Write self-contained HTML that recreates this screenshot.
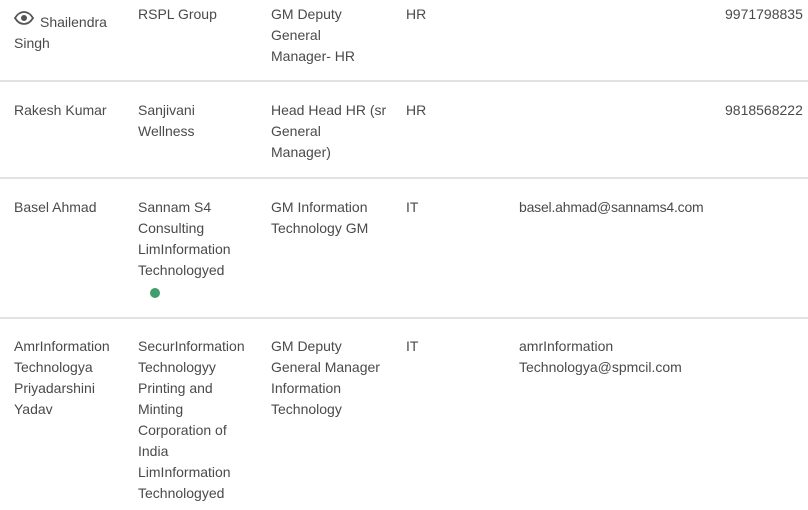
<!DOCTYPE html>
<html><head><meta charset="utf-8"><style>
body{margin:0;width:808px;height:510px;overflow:hidden;background:#fff;font-family:"Liberation Sans",sans-serif;font-size:14px;line-height:21px;color:#4a4a4a;position:relative}
.t{position:absolute;white-space:nowrap}
.sep{position:absolute;left:0;width:808px;height:2px;background:#e2e2e2}
.dot{position:absolute;width:10px;height:10px;border-radius:50%;background:#3f9e6a}
</style></head><body>
<svg style="position:absolute;left:14px;top:11px" width="20" height="14" viewBox="0 0 20 14"><path d="M1 7C4 2 7 1 10 1s6 1 9 6c-3 5-6 6-9 6S4 12 1 7z" fill="none" stroke="#555" stroke-width="1.8"/><circle cx="10" cy="7" r="3" fill="#555"/></svg>
<div class="t" style="left:40px;top:12px">Shailendra</div>
<div class="t" style="left:14px;top:33px">Singh</div>
<div class="t" style="left:138px;top:4px">RSPL Group</div>
<div class="t" style="left:271px;top:4px">GM Deputy<br>General<br>Manager- HR</div>
<div class="t" style="left:406px;top:4px">HR</div>
<div class="t" style="left:725px;top:4px">9971798835</div>
<div class="sep" style="top:80px"></div>
<div class="t" style="left:14px;top:100px">Rakesh Kumar</div>
<div class="t" style="left:138px;top:100px">Sanjivani<br>Wellness</div>
<div class="t" style="left:271px;top:100px">Head Head HR (sr<br>General<br>Manager)</div>
<div class="t" style="left:406px;top:100px">HR</div>
<div class="t" style="left:725px;top:100px">9818568222</div>
<div class="sep" style="top:177px"></div>
<div class="t" style="left:14px;top:197px">Basel Ahmad</div>
<div class="t" style="left:138px;top:197px">Sannam S4<br>Consulting<br>LimInformation<br>Technologyed</div>
<div class="t" style="left:271px;top:197px">GM Information<br>Technology GM</div>
<div class="t" style="left:406px;top:197px">IT</div>
<div class="t" style="left:519px;top:197px;letter-spacing:-0.2px">basel.ahmad@sannams4.com</div>
<div class="dot" style="left:150px;top:288px"></div>
<div class="sep" style="top:317px"></div>
<div class="t" style="left:14px;top:336px">AmrInformation<br>Technologya<br>Priyadarshini<br>Yadav</div>
<div class="t" style="left:138px;top:336px">SecurInformation<br>Technologyy<br>Printing and<br>Minting<br>Corporation of<br>India<br>LimInformation<br>Technologyed</div>
<div class="t" style="left:271px;top:336px">GM Deputy<br>General Manager<br>Information<br>Technology</div>
<div class="t" style="left:406px;top:336px">IT</div>
<div class="t" style="left:519px;top:336px">amrInformation<br>Technologya@spmcil.com</div>
</body></html>
